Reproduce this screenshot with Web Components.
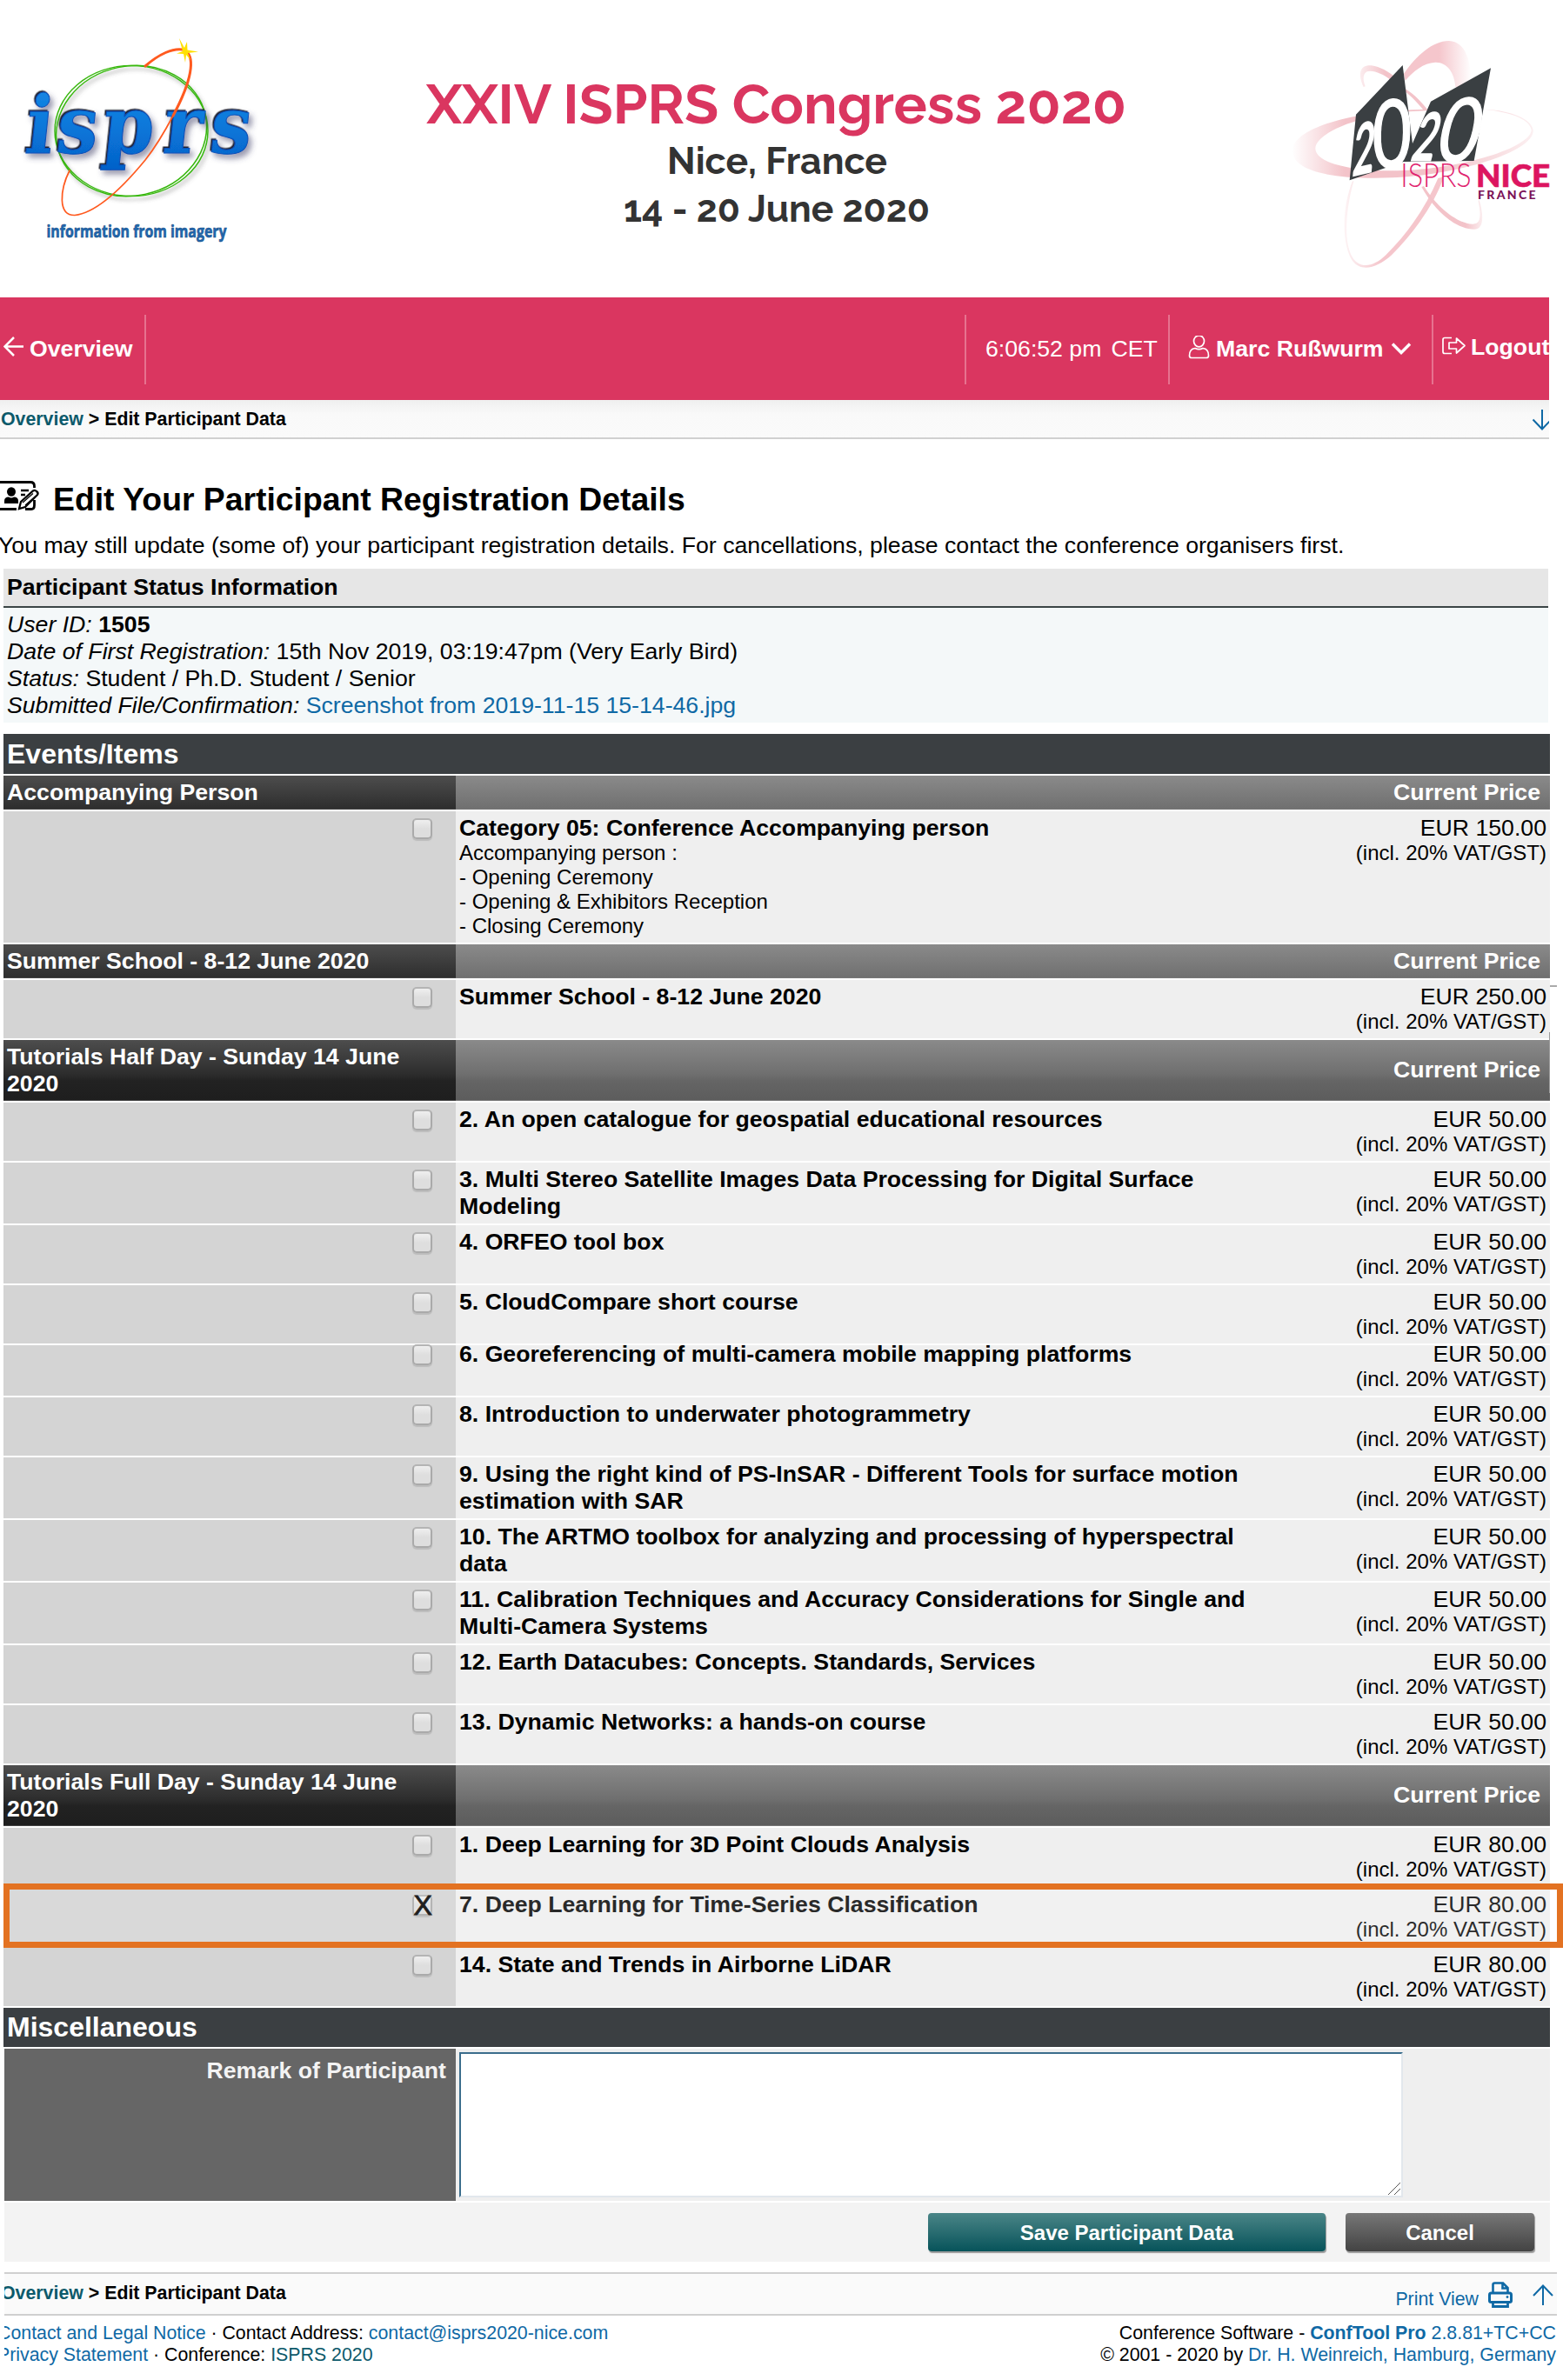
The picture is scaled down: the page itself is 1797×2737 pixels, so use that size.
<!DOCTYPE html>
<html lang="en">
<head>
<meta charset="utf-8">
<title>Edit Your Participant Registration Details</title>
<style>
html,body{margin:0;padding:0;background:#fff}
body{width:1797px;height:2737px;overflow:hidden;font-family:"Liberation Sans",Arial,sans-serif;font-size:26.67px;line-height:31px;color:#000}
</style>
</head>
<body>
<conf-page></conf-page>
<script>
const define = (name, html) => {
  const tpl = document.createElement('template');
  tpl.innerHTML = html;
  customElements.define(name, class extends HTMLElement {
    constructor() {
      super();
      this.attachShadow({ mode: 'open' }).appendChild(tpl.content.cloneNode(true));
    }
  });
};

define('isprs-logo', `
<style>:host{display:block;width:300px;height:342px}svg{display:block}</style>
<svg width="300" height="342" viewBox="0 0 300 342">
  <defs>
    <linearGradient id="b" x1="0" y1="0" x2="0" y2="1"><stop offset="0" stop-color="#1a8ae6"/><stop offset=".5" stop-color="#0878da"/><stop offset="1" stop-color="#0560c8"/></linearGradient>
    <filter id="sh" x="-20%" y="-20%" width="150%" height="150%"><feDropShadow dx="-1.500" dy="-1.500" stdDeviation=".4" flood-color="#1b2430"/><feDropShadow dx="4" dy="5" stdDeviation="3" flood-color="#3a3a66" flood-opacity=".5"/></filter>
    <filter id="s2" x="-20%" y="-20%" width="150%" height="150%"><feDropShadow dx="3" dy="4" stdDeviation="2" flood-color="#555" flood-opacity=".4"/></filter>
  </defs>
  <g fill="none" filter="url(#s2)">
    <ellipse cx="151" cy="150.500" rx="88" ry="75" stroke="#39b80f" stroke-width="1.500"/>
    <ellipse cx="151" cy="150.500" rx="87" ry="74.500" stroke="#39b80f" stroke-width="1.500" transform="rotate(-12 151 150)"/>
  </g>
  <g filter="url(#sh)" font-family="'DejaVu Serif Condensed','DejaVu Serif',serif" font-stretch="condensed" font-weight="bold" font-size="92">
    <text transform="translate(0 176) skewX(-6) scale(1.020 1)" x="26.500 61.500 113.500 182 234.500" y="0" fill="url(#b)" stroke="#0a4fb8" stroke-width="1">isprs</text>
  </g>
  <g fill="none" stroke="#ff5a1f" stroke-linecap="round">
    <path d="M167 76C183 62 199 55 210 57" stroke-width="3"/>
    <path d="M214 59C224 67 221 92 199 133" stroke-width="3"/>
    <path d="M199 133C188 154 178 170 167 184C139 218 109 245 86 247.500C66 248 69 218 80 196" stroke-width="1.700"/>
  </g>
  <path d="M206 44L212 55L215 48L215.500 57.500L228 59.500L216 61L219 69L214 63L213 72L211 62L203 61.500L210 59Z" fill="#ffe000"/>
  <text x="53.500" y="273" font-family="'Open Sans','Noto Sans',sans-serif" font-weight="bold" font-size="19.500" fill="#2068b0" stroke="#1c4f86" stroke-width=".6" textLength="207" lengthAdjust="spacingAndGlyphs">information from imagery</text>
</svg>`);

define('congress-title', `
<style>:host{display:block;width:894px;height:342px}svg{display:block}text{font-family:Raleway,Lato,sans-serif;font-weight:bold}</style>
<svg width="894" height="342" viewBox="446 0 894 342">
  <text x="490" y="142" font-size="64" fill="#da3660" textLength="805" lengthAdjust="spacingAndGlyphs">XXIV ISPRS Congress 2020</text>
  <text x="767" y="200" font-size="43" fill="#333" textLength="253" lengthAdjust="spacingAndGlyphs">Nice, France</text>
  <text x="717" y="255" font-size="43" fill="#333" textLength="352" lengthAdjust="spacingAndGlyphs">14 - 20 June 2020</text>
</svg>`);

define('nice-logo', `
<style>:host{display:block;width:357px;height:320px;margin-top:20px}svg{display:block}</style>
<svg width="357" height="320" viewBox="0 0 1071 960">
  <defs>
    <linearGradient id="l" gradientUnits="userSpaceOnUse" x1="135" y1="0" x2="970" y2="0"><stop offset="0" stop-color="#f3c3c9" stop-opacity="0"/><stop offset=".22" stop-color="#f3c3c9"/><stop offset=".6" stop-color="#f3c3c9"/><stop offset="1" stop-color="#f3c3c9" stop-opacity=".25"/></linearGradient>
    <linearGradient id="t" gradientUnits="userSpaceOnUse" x1="310" y1="0" x2="755" y2="0"><stop offset="0" stop-color="#f5c6cc" stop-opacity=".15"/><stop offset=".3" stop-color="#f5c6cc"/><stop offset=".75" stop-color="#f5c6cc"/><stop offset="1" stop-color="#f5c6cc" stop-opacity="0"/></linearGradient>
    <linearGradient id="d" gradientUnits="userSpaceOnUse" x1="370" y1="0" x2="800" y2="0"><stop offset="0" stop-color="#f3c3c9" stop-opacity=".3"/><stop offset=".2" stop-color="#f3c3c9"/><stop offset=".85" stop-color="#f3c3c9"/><stop offset="1" stop-color="#f3c3c9" stop-opacity=".2"/></linearGradient>
  </defs>
  <path fill="url(#l)" fill-rule="evenodd" d="M600 317C350 322 138 380 138 460C138 535 290 560 480 553C700 545 975 465 968 388C960 340 860 318 800 317C870 324 955 345 962 388C960 450 720 524 500 529C330 531 215 500 217 450C219 400 370 328 600 322Z"/>
  <path fill="url(#t)" fill-rule="evenodd" d="M522 195C565 130 625 80 678 81C735 84 757 150 752 240L700 240C697 190 670 153 630 155C590 157 555 185 527 218Z"/>
  <path fill="url(#t)" d="M345 565C310 650 305 780 345 840C375 880 430 865 480 820C560 740 630 640 660 550L640 555C600 650 540 740 460 820C420 860 370 870 345 828C310 770 325 650 349 565Z"/>
  <path fill="url(#d)" d="M383 240C362 195 370 163 410 166C440 170 470 188 490 205L476 215C450 195 415 180 395 187C380 195 380 215 389 238Z"/>
  <path fill="url(#d)" d="M525 245C560 265 590 300 605 320L590 320C570 295 545 270 525 255Z"/>
  <path fill="url(#d)" d="M583 585C630 670 700 730 765 731C800 731 797 680 782 630L779 632C788 680 790 712 760 713C710 712 640 660 591 582Z"/>
  <path fill="#3a3f42" d="M357 335L518 165L552 435L615 290L822 175L764 495L520 498L335 562Z"/>
  <g fill="#fff" stroke="#fff" font-family="Lato,sans-serif" font-size="100">
    <text stroke-width="4" transform="matrix(1.250 -.300 -.200 2.400 343 546)">2</text>
    <text stroke-width="1.500" transform="matrix(2.350 -.200 -.060 3.250 411 523)">0</text>
    <text stroke-width="4" transform="matrix(1.350 0 -.600 2.250 543 492)">2</text>
    <text stroke-width="1.500" transform="matrix(2.450 -.050 -.700 3.050 624 499)">0</text>
  </g>
  <g font-family="Lato,sans-serif">
    <text x="511" y="585" font-size="111" font-weight="300" fill="#e0246f" textLength="244" lengthAdjust="spacingAndGlyphs">ISPRS</text>
    <text x="771" y="585" font-size="110" font-weight="900" fill="#dc1560" stroke="#dc1560" stroke-width="2" textLength="256" lengthAdjust="spacingAndGlyphs">NICE</text>
    <text x="777" y="627" font-size="42" font-weight="900" fill="#7b1257" textLength="200">FRANCE</text>
  </g>
</svg>`);

define('nav-bar', `
<style>
:host{display:flex;width:1781px;height:118px;background:#da3660;color:#fff;white-space:pre;box-sizing:border-box;padding-top:20px;align-items:flex-start}
div{height:80px;box-sizing:border-box;display:flex;padding-top:24px}
svg{display:block;flex:none}
.back{width:168px;border-right:2px solid #e6728f;font-weight:bold;padding-left:4px}
.time{margin-left:auto;width:234px;border-left:2px solid #e6728f;padding-left:22px;gap:11px}
.user{width:303px;border-left:2px solid #e6728f;padding-left:21px;font-weight:bold}
.out{width:135px;border-left:2px solid #e6728f;padding-left:9px;font-weight:bold;padding-top:22px}
</style>
<div class="back"><svg width="30" height="26" fill="none" stroke="#fff" stroke-width="2.500"><path d="M23 12.500H2M12 2L1.500 12.500L12 23"/></svg><span>Overview</span></div>
<div class="time"><span>6:06:52 pm</span><span>CET</span></div>
<div class="user"><svg width="32" height="28" fill="none" stroke="#fff" stroke-width="1.700"><ellipse cx="12.500" cy="6.500" rx="6" ry="6.500" transform="translate(0 -.2)"/><path d="M8 14.500C3 15 1.500 19 1.500 23Q1.500 25.500 4 25.500H21Q23.500 25.500 23.500 23C23.500 19 22 15 17 14.500C14 16 11 16 8 14.500Z"/></svg><span>Marc Rußwurm</span><svg width="40" height="28" fill="none" stroke="#fff" stroke-width="3.400"><path d="M10 9.500L20 19.500L30 9.500"/></svg></div>
<div class="out"><svg width="34" height="27" fill="none" stroke="#fff" stroke-width="1.700" stroke-linejoin="round"><path d="M12 4.500H4Q2 4.500 2 6.500V20.500Q2 22.500 4 22.500H12M17.500 5L27 13.500L17.500 22V17H9V10H17.500Z"/></svg><span>Logout</span></div>`);

define('bread-crumb', `
<style>
:host{display:flex;box-sizing:border-box;justify-content:space-between;font-size:21.33px;font-weight:bold;line-height:26px;overflow:hidden;white-space:pre}
.l{color:#0d5a6b}
.text{padding-top:9px;margin-left:var(--crumb-shift,1px)}
</style>
<span class="text"><span class="l">Overview</span> &gt; Edit Participant Data</span><slot></slot>`);

define('status-box', `
<style>
:host{display:block;margin-left:4px;width:1776px;height:177px;background:#f4f8f9;box-sizing:border-box}
h3{margin:0;height:45px;box-sizing:border-box;background:#e6e6e6;border-bottom:2px solid #3b4546;font-size:26.67px;line-height:31px;padding:6px 4px 0}
p{margin:0;padding:0 4px}
p:first-of-type{padding-top:4px}
a{color:#0f69a5}
</style>
<h3>Participant Status Information</h3>
<p><i>User ID:</i> <b>1505</b></p><p><i>Date of First Registration:</i> 15th Nov 2019, 03:19:47pm (Very Early Bird)</p><p><i>Status:</i> Student / Ph.D. Student / Senior</p><p><i>Submitted File/Confirmation:</i> <a>Screenshot from 2019-11-15 15-14-46.jpg</a></p>`);

define('section-bar', `
<style>:host{display:block;height:46px;width:1778px;background:#3b3f42;color:#fff;font-weight:bold;font-size:32px;line-height:37px;padding:var(--bar-pad,5px) 0 0 4px;box-sizing:border-box}</style><slot></slot>`);

define('group-head', `
<style>
:host{display:flex;width:1778px;min-height:39px;color:#fff;font-weight:bold}
.name{width:520px;box-sizing:border-box;padding:4px 40px 3px 4px;background:linear-gradient(#4d4d4d,#2d2d2d 39px,#222 47px,#1e1e1e 70px);border-bottom:1px solid #444}
.price{flex:1;display:flex;align-items:center;justify-content:flex-end;padding-right:11px;background:linear-gradient(#8a8a8a,#6f6f6f 39px,#656565 47px,#5c5c5c 70px);border-bottom:1px solid #777}
</style>
<div class="name"><slot></slot></div><div class="price">Current Price</div>`);

define('check-box', `
<style>
:host{display:block;width:23px;height:24px;box-sizing:border-box;border:2px solid #aaa;border-radius:5px;background:linear-gradient(#efefef,#dedede 50%,#dedede);box-shadow:0 2px 1px #bcbcbc;border-top-color:#b4b4b4}
</style><slot></slot>`);

customElements.define('event-item', class extends HTMLElement {
  connectedCallback() {
    const root = this.attachShadow({ mode: 'open' });
    root.innerHTML = `
<style>
:host{display:flex;width:1778px;height:67px}
:host([tall]){height:70px}
:host([detail]){height:151px}
:host([cut]){height:58px}
:host([cut]) .pick,:host([cut]) .body{padding-top:0}
:host([cut]) .body>div{margin-top:-5px}
:host([cut]) check-box{margin-top:-1px}
.pick{width:520px;box-sizing:border-box;background:#d4d4d4;padding:8px 27px 0 0;display:flex;justify-content:flex-end}
.body{flex:1;background:#efefef;display:flex;justify-content:space-between;padding:4px 4px 0}
.title{font-weight:bold;width:926px}
small{display:block;font-size:24px;line-height:28px;font-weight:normal;margin-top:-1px}
.price{text-align:right;white-space:nowrap}
.mark{font-size:32px;line-height:21px;display:block;margin-left:-.5px;-webkit-text-stroke:.9px #000}
:host([on]) .body{color:#0c0c0c}
</style>
<div class="pick"><check-box>${this.hasAttribute('on') ? '<span class="mark">X</span>' : ''}</check-box></div>
<div class="body"><div class="title"><slot></slot>${this.hasAttribute('detail') ? '<small><slot name="detail"></slot></small>' : ''}</div>
<div class="price">EUR ${this.getAttribute('price')}<small>(incl. 20% VAT/GST)</small></div></div>`;
  }
});

define('remark-row', `
<style>
:host{display:flex;width:1777px;height:175px;margin-left:1px}
.label{width:519px;box-sizing:border-box;background:#666;color:#f3f3f3;font-weight:bold;text-align:right;padding:10px 11px 0 0}
.field{flex:1;background:#efefef;padding:4px}
.area{width:1085px;height:167px;box-sizing:border-box;background:#fff;border:2px solid;border-color:#3b6d8c #e2e7ec #e2e7ec #3b6d8c;display:flex;align-items:flex-end;justify-content:flex-end}
</style>
<div class="label">Remark of Participant</div><div class="field"><div class="area"><svg width="16" height="16" stroke="#555" stroke-width="1"><path d="M1 15L15 1M8 15L15 8"/></svg></div></div>`);

define('action-button', `
<style>
:host{display:block;box-sizing:border-box;height:44px;border-radius:4px;color:#fff;font-weight:bold;font-size:24px;line-height:28px;padding-top:9px;text-align:center;width:217px;background:linear-gradient(#777,#434343);box-shadow:1px 2px 1px #999}
:host([primary]){width:457px;background:linear-gradient(#4a8587,#07535a)}
</style><slot></slot>`);

define('page-footer', `
<style>
:host{display:flex;justify-content:space-between;margin-left:5px;width:1785px;font-size:21.33px;line-height:25px;padding-top:8px;overflow:hidden}
.left{margin-left:-8px}
.right{text-align:right;padding-right:1px}
p{margin:0;white-space:nowrap}
a{color:#0f69a5}.t{color:#0d5a6b}
</style>
<div class="left"><p><a>Contact and Legal Notice</a> · Contact Address: <a>contact@isprs2020-nice.com</a></p><p><a>Privacy Statement</a> · Conference: <a class="t">ISPRS 2020</a></p></div>
<div class="right"><p>Conference Software - <a><b>ConfTool Pro</b> 2.8.81+TC+CC</a></p><p>© 2001 - 2020 by <a>Dr. H. Weinreich, Hamburg, Germany</a></p></div>`);

define('conf-page', `
<style>
:host{display:flex;flex-direction:column;width:1797px;height:2737px;overflow:hidden;position:relative}
header{display:grid;grid-template-columns:446px 894px 100px 357px;height:342px}
nice-logo{grid-column:4}
.top{width:1781px;height:45px;border-bottom:2px solid #d0d0d0;background:linear-gradient(#efefef,#f9f9f9 16px,#fafafa)}
.top svg{width:21px}
.bottom{margin:12px 0 0 5px;width:1785px;height:50px;border:solid #d0d0d0;border-width:2px 0;background:#fafafa;--crumb-shift:-4px}
h1{margin:0;display:flex;height:110px;box-sizing:border-box;padding-top:48px;font-size:37.330px;line-height:43px}
h1 svg{display:block;width:61px;height:38px}
.intro{margin:-3px 0 0 -2px;height:42px;white-space:pre}
.table{display:flex;flex-direction:column;gap:2px;margin:13px 0 0 4px;width:1778px}
.actions{display:flex;justify-content:flex-end;gap:23px;height:68px;box-sizing:border-box;background:#f3f3f3;margin-left:1px;padding:12px 18px 0 0}
.hl{position:absolute;left:4px;top:2166px;width:1793px;height:74px;box-sizing:border-box;border:7px solid #e37222;background:rgba(255,255,255,.12)}
.tick{position:absolute;left:1782px;top:1133px;width:8px;height:2px;background:#aaa}
.edge{position:absolute;left:1781px;top:1187px;width:1px;height:70px;background:#999}
.tools{display:flex;font-weight:normal;color:#0f69a5}
.tools span{padding-top:16px}
.misc{height:45px;--bar-pad:4px}
</style>
<header><isprs-logo></isprs-logo><congress-title></congress-title><nice-logo></nice-logo></header>
<nav-bar></nav-bar>
<bread-crumb class="top"><svg width="21" height="43" fill="none" stroke="#0f69a5" stroke-width="2"><path d="M13 11V33M2.500 22.500L13 33.500L23.500 22.500"/></svg></bread-crumb>
<h1><svg viewBox="0 0 61 38" fill="none" stroke="#000" stroke-width="2.800"><path d="M0 1.500H35Q39.500 1.500 39.500 6V8M0 32.500H19M39.500 22V28Q39.500 32.500 36 32.500H29"/><ellipse cx="13" cy="12.500" rx="5" ry="5.200" fill="#000" stroke="none"/><path d="M5 26V23Q5 18.500 10 18.500Q13 20.500 16 18.500Q21 18.500 21 23V26Z" fill="#000" stroke="none"/><path d="M24 11H33M24 16H29M22 32L24 24L38 11.500Q40 10 42 12Q44.500 14 43 16L29 30Z" stroke-width="2.300"/><path d="M26 25L38 14.500M29 28L41 17.500" stroke-width="1.200"/></svg><span>Edit Your Participant Registration Details</span></h1>
<div class="intro">You may still update (some of) your participant registration details. For cancellations, please contact the conference organisers first.</div>
<status-box></status-box>
<div class="table">
<section-bar>Events/Items</section-bar>
<group-head>Accompanying Person</group-head>
<event-item price="150.00" detail>Category 05: Conference Accompanying person<span slot="detail">Accompanying person :<br>- Opening Ceremony<br>- Opening &amp; Exhibitors Reception<br>- Closing Ceremony</span></event-item>
<group-head>Summer School - 8-12 June 2020</group-head>
<event-item price="250.00">Summer School - 8-12 June 2020</event-item>
<group-head>Tutorials Half Day - Sunday 14 June 2020</group-head>
<event-item price="50.00">2. An open catalogue for geospatial educational resources</event-item>
<event-item price="50.00" tall>3. Multi Stereo Satellite Images Data Processing for Digital Surface Modeling</event-item>
<event-item price="50.00">4. ORFEO tool box</event-item>
<event-item price="50.00">5. CloudCompare short course</event-item>
<event-item price="50.00" cut>6. Georeferencing of multi-camera mobile mapping platforms</event-item>
<event-item price="50.00">8. Introduction to underwater photogrammetry</event-item>
<event-item price="50.00" tall>9. Using the right kind of PS-InSAR - Different Tools for surface motion estimation with SAR</event-item>
<event-item price="50.00" tall>10. The ARTMO toolbox for analyzing and processing of hyperspectral data</event-item>
<event-item price="50.00" tall>11. Calibration Techniques and Accuracy Considerations for Single and Multi-Camera Systems</event-item>
<event-item price="50.00">12. Earth Datacubes: Concepts. Standards, Services</event-item>
<event-item price="50.00">13. Dynamic Networks: a hands-on course</event-item>
<group-head>Tutorials Full Day - Sunday 14 June 2020</group-head>
<event-item price="80.00">1. Deep Learning for 3D Point Clouds Analysis</event-item>
<event-item price="80.00" on>7. Deep Learning for Time-Series Classification</event-item>
<event-item price="80.00">14. State and Trends in Airborne LiDAR</event-item>
<section-bar class="misc">Miscellaneous</section-bar>
<remark-row></remark-row>
<div class="actions"><action-button primary>Save Participant Data</action-button><action-button>Cancel</action-button></div>
</div>
<bread-crumb class="bottom"><div class="tools"><span>Print View</span><svg width="90" height="46" fill="none" stroke="#0f69a5"><path d="M16.500 23V12.500Q16.500 10.500 18.500 10.500H28L33.500 16V23M27.500 11V16.500H33.500" stroke-width="2.600"/><path d="M12.500 31V24Q12.500 22 14.500 22H35.500Q37.500 22 37.500 24V31Q37.500 32.500 35.500 32.500H14.500Q12.500 32.500 12.500 31Z" stroke-width="3"/><path d="M16.500 31V37.500H33.500V31" stroke-width="2.800"/><circle cx="33" cy="26.500" r="1" fill="#0f69a5"/><path d="M74 36V14M63 25L74 13.500L85 25" stroke-width="2"/></svg></div></bread-crumb>
<page-footer></page-footer>
<div class="hl"></div><div class="tick"></div><div class="edge"></div>`);
</script>
</body>
</html>
